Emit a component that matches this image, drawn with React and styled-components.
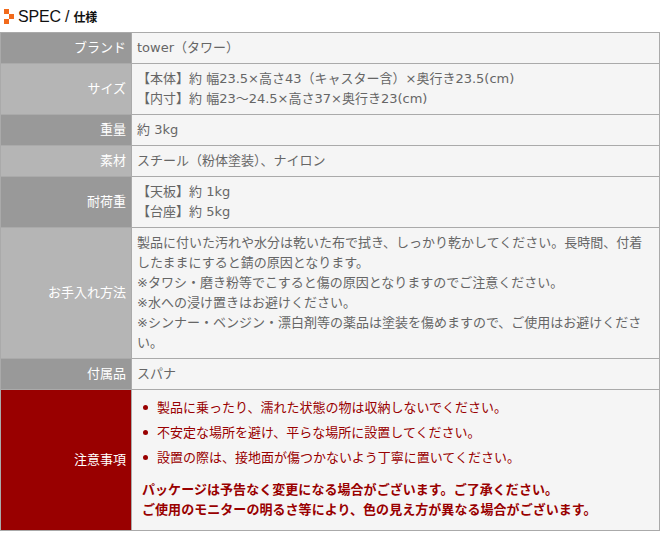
import React from "react";
import styled, { createGlobalStyle } from "styled-components";

const GlobalStyle = createGlobalStyle`
  html, body {
    margin: 0;
    padding: 0;
    background: #fff;
    font-family: "DejaVu Sans", "Noto Sans CJK JP", sans-serif;
  }
`;

const Container = styled.div`
  width: 660px;
  height: 546px;
  overflow: hidden;
`;

const Heading = styled.h2`
  display: flex;
  align-items: center;
  gap: 4px;
  height: 32px;
  margin: 0;
  padding: 1px 0 0 4px;
  box-sizing: border-box;
  color: #111;
  font-weight: normal;
`;

const Title = styled.span`
  font-family: "Liberation Sans", sans-serif;
  font-size: 16px;
  letter-spacing: -0.2px;

  & > b {
    font-size: 12px;
    font-family: "Noto Sans CJK JP", sans-serif;
  }
`;

const SpecTable = styled.table`
  width: 660px;
  border-collapse: separate;
  border-spacing: 0;
  table-layout: fixed;
  border-top: 1px solid #aaa;
`;

const Label = styled.th`
  box-sizing: border-box;
  width: 131px;
  padding: 5px 5px 5px 0;
  border-bottom: 1px solid #aaa;
  border-left: 1px solid #aaa;
  background: ${(props) =>
    props.$alert ? "#990000" : props.$light ? "#b5b5b5" : "#999999"};
  color: #fff;
  font-size: 13px;
  font-weight: normal;
  line-height: 20px;
  text-align: right;
`;

const Value = styled.td`
  padding: 5px 12px 5px 5px;
  border-bottom: 1px solid #aaa;
  border-left: 1px solid #aaa;
  border-right: 1px solid #aaa;
  background: #f5f5f5;
  color: #666;
  font-size: 13px;
  line-height: 20px;
`;

const Notes = styled.ul`
  margin: 0;
  padding: 0;
  list-style: none;
`;

const Note = styled.li`
  display: flex;
  align-items: center;
  gap: 9px;
  height: 25px;
  padding-left: 6px;
  color: #990000;
`;

const Dot = styled.i`
  width: 5px;
  height: 5px;
  border-radius: 50%;
  background: #990000;
`;

const Warning = styled.p`
  margin: 10px 0 5px;
  padding-left: 5px;
  color: #990000;
  font-weight: bold;
  letter-spacing: 0.05px;
`;

const rows = [
  { label: "ブランド", lines: ["tower（タワー）"] },
  {
    label: "サイズ",
    light: true,
    lines: [
      "【本体】約 幅23.5×高さ43（キャスター含）×奥行き23.5(cm)",
      "【内寸】約 幅23～24.5×高さ37×奥行き23(cm)",
    ],
  },
  { label: "重量", lines: ["約 3kg"] },
  { label: "素材", light: true, lines: ["スチール（粉体塗装）、ナイロン"] },
  { label: "耐荷重", lines: ["【天板】約 1kg", "【台座】約 5kg"] },
  {
    label: "お手入れ方法",
    light: true,
    lines: [
      "製品に付いた汚れや水分は乾いた布で拭き、しっかり乾かしてください。長時間、付着したままにすると錆の原因となります。",
      "※タワシ・磨き粉等でこすると傷の原因となりますのでご注意ください。",
      "※水への浸け置きはお避けください。",
      "※シンナー・ベンジン・漂白剤等の薬品は塗装を傷めますので、ご使用はお避けください。",
    ],
  },
  { label: "付属品", lines: ["スパナ"] },
];

const notes = [
  "製品に乗ったり、濡れた状態の物は収納しないでください。",
  "不安定な場所を避け、平らな場所に設置してください。",
  "設置の際は、接地面が傷つかないよう丁寧に置いてください。",
];

function Marker() {
  return (
    <svg width="10" height="15" viewBox="0 0 10 15">
      <rect x="0" y="0" width="5" height="5" fill="#f26a1b" />
      <rect x="5" y="5" width="5" height="5" fill="#f26a1b" />
      <rect x="0" y="10" width="5" height="5" fill="#f26a1b" />
    </svg>
  );
}

export default function App() {
  return (
    <Container>
      <GlobalStyle />
      <Heading>
        <Marker />
        <Title>
          SPEC / <b>仕様</b>
        </Title>
      </Heading>
      <SpecTable>
        <tbody>
          {rows.map((row) => (
            <tr key={row.label}>
              <Label $light={row.light}>{row.label}</Label>
              <Value>
                {row.lines.map((line) => (
                  <div key={line}>{line}</div>
                ))}
              </Value>
            </tr>
          ))}
          <tr>
            <Label $alert>注意事項</Label>
            <Value>
              <Notes>
                {notes.map((note) => (
                  <Note key={note}>
                    <Dot />
                    {note}
                  </Note>
                ))}
              </Notes>
              <Warning>
                パッケージは予告なく変更になる場合がございます。ご了承ください。
                <br />
                ご使用のモニターの明るさ等により、色の見え方が異なる場合がございます。
              </Warning>
            </Value>
          </tr>
        </tbody>
      </SpecTable>
    </Container>
  );
}
